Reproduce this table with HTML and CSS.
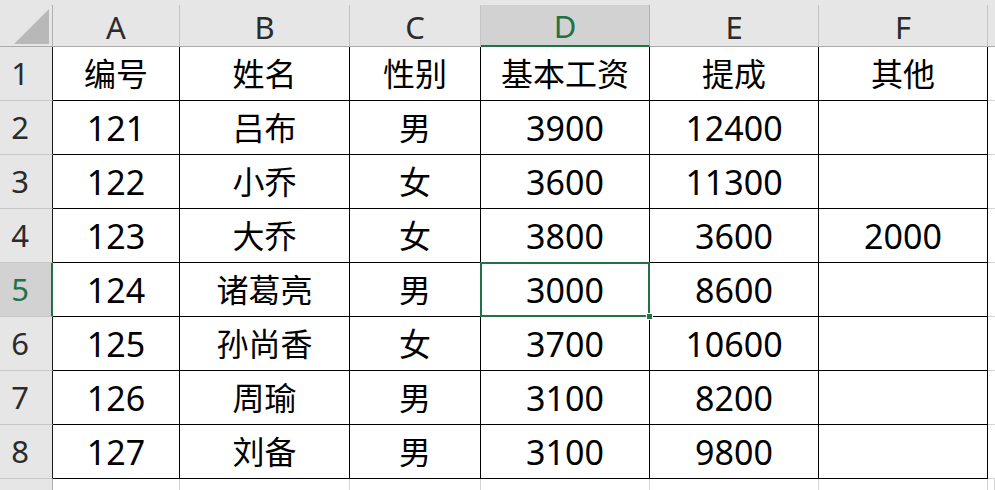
FILE: index.html
```html
<!DOCTYPE html>
<html lang="zh">
<head>
<meta charset="utf-8">
<title>Sheet</title>
<link rel="stylesheet" href="styles.css">
</head>
<body>
<div class="sheet">
  <div class="colhead">
    <div class="hc corner"><span class="tri"></span></div>
    <div class="hc">A</div>
    <div class="hc">B</div>
    <div class="hc">C</div>
    <div class="hc sel">D</div>
    <div class="hc">E</div>
    <div class="hc">F</div>
    <div class="hc last"></div>
  </div>
  <div class="grid">
    <div class="rh">1</div>
    <div class="c zh">编号</div><div class="c zh">姓名</div><div class="c zh">性别</div><div class="c zh">基本工资</div><div class="c zh">提成</div><div class="c zh">其他</div><div class="g"></div>

    <div class="rh">2</div>
    <div class="c num">121</div><div class="c zh">吕布</div><div class="c zh">男</div><div class="c num">3900</div><div class="c num">12400</div><div class="c num"></div><div class="g"></div>

    <div class="rh">3</div>
    <div class="c num">122</div><div class="c zh">小乔</div><div class="c zh">女</div><div class="c num">3600</div><div class="c num">11300</div><div class="c num"></div><div class="g"></div>

    <div class="rh">4</div>
    <div class="c num">123</div><div class="c zh">大乔</div><div class="c zh">女</div><div class="c num">3800</div><div class="c num">3600</div><div class="c num">2000</div><div class="g"></div>

    <div class="rh rsel">5</div>
    <div class="c num">124</div><div class="c zh">诸葛亮</div><div class="c zh">男</div><div class="c num active">3000</div><div class="c num">8600</div><div class="c num"></div><div class="g"></div>

    <div class="rh">6</div>
    <div class="c num">125</div><div class="c zh">孙尚香</div><div class="c zh">女</div><div class="c num">3700</div><div class="c num">10600</div><div class="c num"></div><div class="g"></div>

    <div class="rh">7</div>
    <div class="c num">126</div><div class="c zh">周瑜</div><div class="c zh">男</div><div class="c num">3100</div><div class="c num">8200</div><div class="c num"></div><div class="g"></div>

    <div class="rh">8</div>
    <div class="c num">127</div><div class="c zh">刘备</div><div class="c zh">男</div><div class="c num">3100</div><div class="c num">9800</div><div class="c num"></div><div class="g"></div>

    <div class="rh empty"></div>
    <div class="e"></div><div class="e"></div><div class="e"></div><div class="e"></div><div class="e"></div><div class="e"></div><div class="e"></div>
  </div>
</div>
</body>
</html>
```
FILE: styles.css
```css
html, body {
  margin: 0;
  padding: 0;
  background: #ffffff;
  overflow: hidden;
}

.sheet {
  width: 995px;
  height: 490px;
  overflow: hidden;
  font-family: "Noto Sans", "Noto Sans CJK SC", sans-serif;
}

.colhead {
  display: grid;
  grid-template-columns: 53px 127px 170px 131px 169px 169px 169px 1fr;
  height: 47px;
  padding-top: 5px;
  box-sizing: border-box;
  background: #e6e6e6;
}

.hc {
  box-sizing: border-box;
  height: 42px;
  border-right: 1px solid #c4c4c4;
  border-bottom: 1px solid #ababab;
  display: flex;
  align-items: center;
  justify-content: center;
  font-family: "Noto Sans", sans-serif;
  font-size: 31px;
  line-height: 1;
  color: #2b2b2b;
  padding-top: 3px;
}

.hc.corner {
  position: relative;
  border-right: 1px solid #b0b0b0;
}

.tri {
  position: absolute;
  left: 14px;
  top: 4px;
  width: 35px;
  height: 35px;
  background: #b8b8b8;
  clip-path: polygon(100% 0, 100% 100%, 0 100%);
}

.hc.sel {
  background: #d2d2d2;
  color: #217346;
  border-bottom: 2px solid #217346;
  border-right-color: #b0b0b0;
}

.hc.last {
  border-right: none;
}

.grid {
  display: grid;
  grid-template-columns: 53px 127px 170px 131px 169px 169px 169px 1fr;
  grid-auto-rows: 54px;
}

.rh {
  box-sizing: border-box;
  background: #e6e6e6;
  border-bottom: 1px solid #c6c6c6;
  border-right: 1px solid #1a1a1a;
  display: flex;
  align-items: center;
  justify-content: center;
  font-family: "Noto Sans", sans-serif;
  font-size: 31px;
  line-height: 1;
  color: #2b2b2b;
  padding-right: 12px;
}

.rh.rsel {
  background: #d2d2d2;
  color: #217346;
  border-right: 2px solid #217346;
  padding-right: 11px;
}

.rh.empty {
  border-right-color: #b0b0b0;
  border-bottom: none;
}

.c {
  box-sizing: border-box;
  border-right: 1px solid #000000;
  border-bottom: 1px solid #000000;
  display: flex;
  align-items: center;
  justify-content: center;
  line-height: 1;
  color: #000000;
}

.zh {
  font-family: "Noto Sans CJK SC", sans-serif;
  font-size: 32px;
  padding-bottom: 3px;
}

.num {
  font-family: "Noto Sans", "Noto Sans CJK SC", sans-serif;
  font-size: 34px;
  padding-top: 1px;
}

.active {
  position: relative;
}

.active::after {
  content: "";
  position: absolute;
  left: -1px;
  top: -1px;
  right: -1px;
  bottom: -1px;
  border: 2px solid #217346;
}

.active::before {
  content: "";
  position: absolute;
  right: -4px;
  bottom: -4px;
  width: 5px;
  height: 5px;
  background: #217346;
  border: 1px solid #ffffff;
  z-index: 2;
}

.g {
  box-sizing: border-box;
  border-bottom: 1px solid #d4d4d4;
}

.e {
  box-sizing: border-box;
  border-right: 1px solid #d4d4d4;
}
```
